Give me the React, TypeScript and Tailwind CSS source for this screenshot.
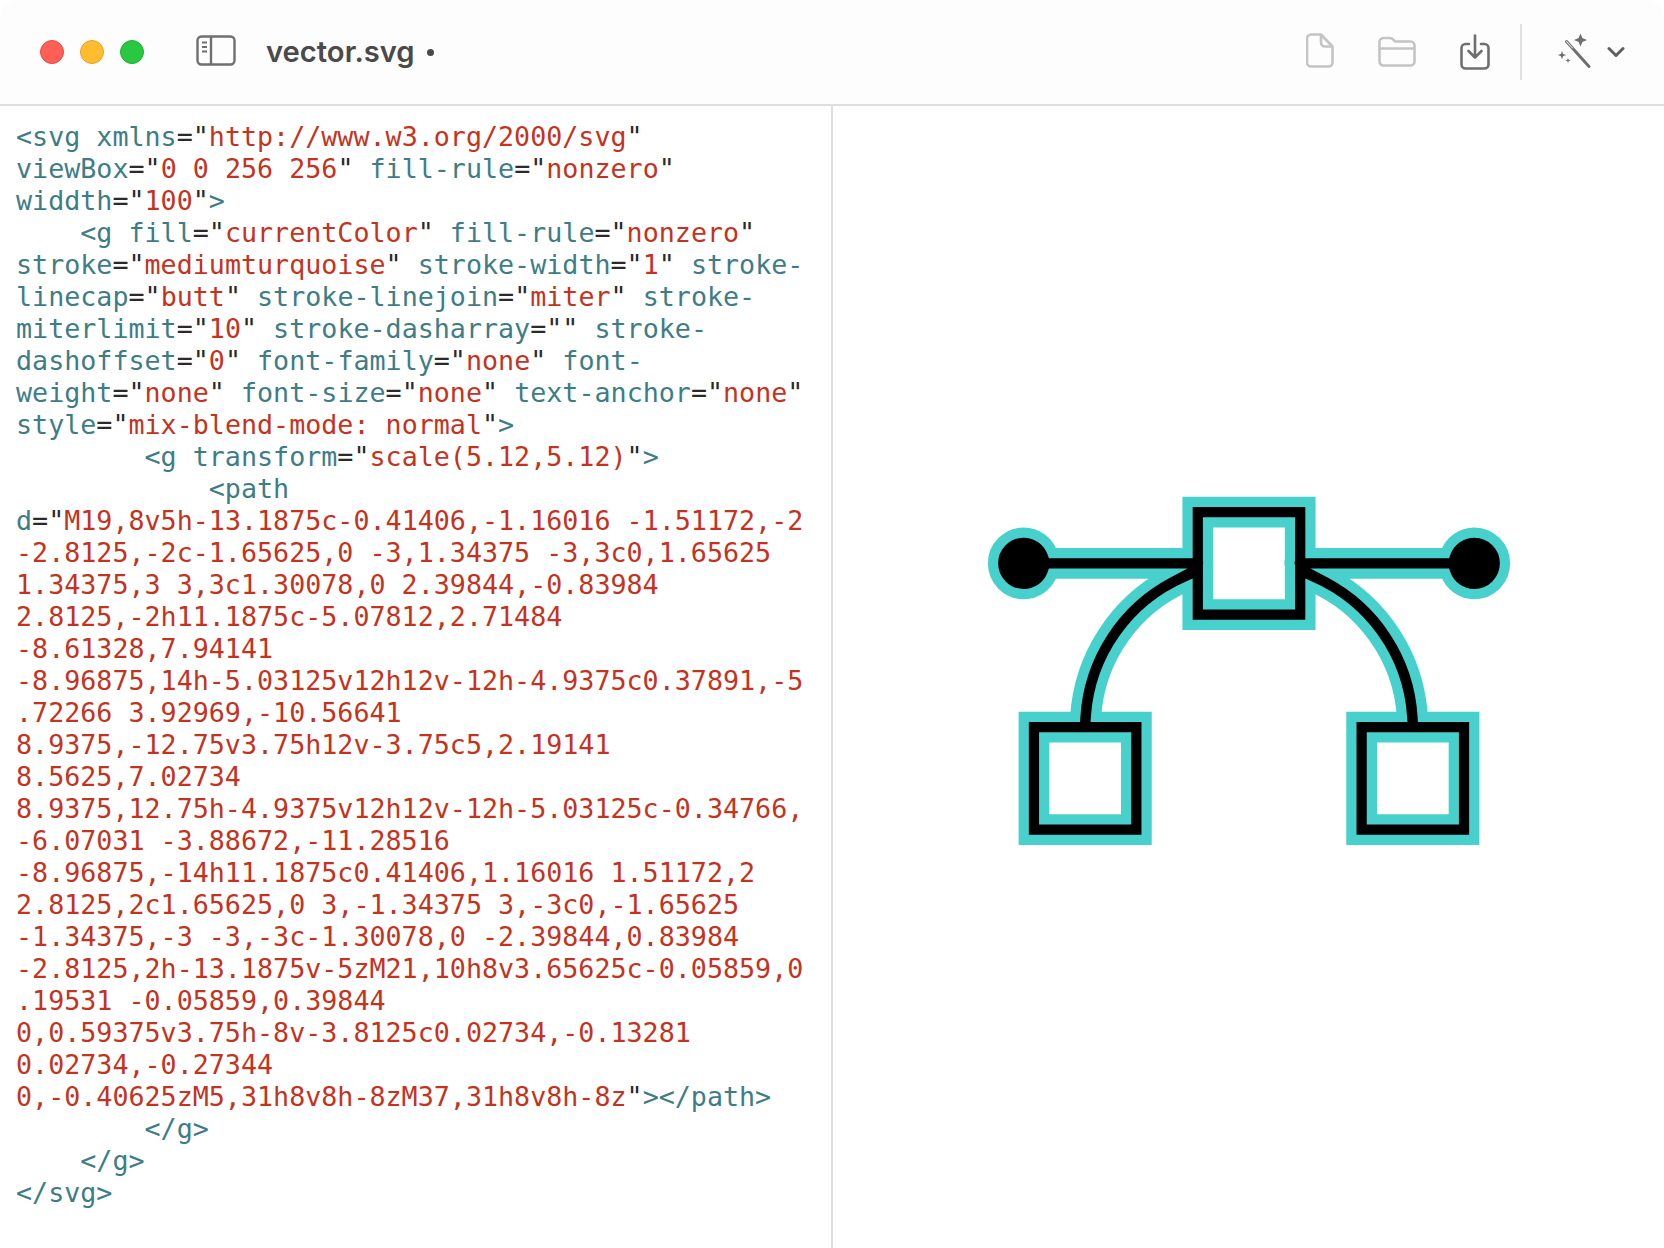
const source = [
  `<svg xmlns="http://www.w3.org/2000/svg"`,
  `viewBox="0 0 256 256" fill-rule="nonzero"`,
  `widdth="100">`,
  `    <g fill="currentColor" fill-rule="nonzero"`,
  `stroke="mediumturquoise" stroke-width="1" stroke-`,
  `linecap="butt" stroke-linejoin="miter" stroke-`,
  `miterlimit="10" stroke-dasharray="" stroke-`,
  `dashoffset="0" font-family="none" font-`,
  `weight="none" font-size="none" text-anchor="none"`,
  `style="mix-blend-mode: normal">`,
  `        <g transform="scale(5.12,5.12)">`,
  `            <path`,
  `d="M19,8v5h-13.1875c-0.41406,-1.16016 -1.51172,-2`,
  `-2.8125,-2c-1.65625,0 -3,1.34375 -3,3c0,1.65625`,
  `1.34375,3 3,3c1.30078,0 2.39844,-0.83984`,
  `2.8125,-2h11.1875c-5.07812,2.71484`,
  `-8.61328,7.94141`,
  `-8.96875,14h-5.03125v12h12v-12h-4.9375c0.37891,-5`,
  `.72266 3.92969,-10.56641`,
  `8.9375,-12.75v3.75h12v-3.75c5,2.19141`,
  `8.5625,7.02734`,
  `8.9375,12.75h-4.9375v12h12v-12h-5.03125c-0.34766,`,
  `-6.07031 -3.88672,-11.28516`,
  `-8.96875,-14h11.1875c0.41406,1.16016 1.51172,2`,
  `2.8125,2c1.65625,0 3,-1.34375 3,-3c0,-1.65625`,
  `-1.34375,-3 -3,-3c-1.30078,0 -2.39844,0.83984`,
  `-2.8125,2h-13.1875v-5zM21,10h8v3.65625c-0.05859,0`,
  `.19531 -0.05859,0.39844`,
  `0,0.59375v3.75h-8v-3.8125c0.02734,-0.13281`,
  `0.02734,-0.27344`,
  `0,-0.40625zM5,31h8v8h-8zM37,31h8v8h-8z"></path>`,
  `        </g>`,
  `    </g>`,
  `</svg>`,
]

const vectorPath =
  "M19,8v5h-13.1875c-0.41406,-1.16016 -1.51172,-2 -2.8125,-2c-1.65625,0 -3,1.34375 -3,3c0,1.65625 1.34375,3 3,3c1.30078,0 2.39844,-0.83984 2.8125,-2h11.1875c-5.07812,2.71484 -8.61328,7.94141 -8.96875,14h-5.03125v12h12v-12h-4.9375c0.37891,-5.72266 3.92969,-10.56641 8.9375,-12.75v3.75h12v-3.75c5,2.19141 8.5625,7.02734 8.9375,12.75h-4.9375v12h12v-12h-5.03125c-0.34766,-6.07031 -3.88672,-11.28516 -8.96875,-14h11.1875c0.41406,1.16016 1.51172,2 2.8125,2c1.65625,0 3,-1.34375 3,-3c0,-1.65625 -1.34375,-3 -3,-3c-1.30078,0 -2.39844,0.83984 -2.8125,2h-13.1875v-5zM21,10h8v3.65625c-0.05859,0.19531 -0.05859,0.39844 0,0.59375v3.75h-8v-3.8125c0.02734,-0.13281 0.02734,-0.27344 0,-0.40625zM5,31h8v8h-8zM37,31h8v8h-8z"

type Token = { text: string; kind: "tag" | "punct" | "value" }

// quotes run across lines in the path data, so walk the whole source once
function tokenize(lines: string[]) {
  let inString = false
  return lines.map((line) => {
    const tokens: Token[] = []
    const push = (ch: string, kind: Token["kind"]) => {
      const last = tokens[tokens.length - 1]
      if (last && last.kind === kind) last.text += ch
      else tokens.push({ text: ch, kind })
    }
    for (const ch of line) {
      if (ch === '"') {
        push(ch, "punct")
        inString = !inString
      } else if (inString) {
        push(ch, "value")
      } else {
        push(ch, ch === "=" ? "punct" : "tag")
      }
    }
    return tokens
  })
}

const tokenClass = {
  tag: "text-[#3e7d86]",
  punct: "text-[#2a2a2a]",
  value: "text-[#c4331f]",
}

function SidebarIcon() {
  return (
    <svg width="40" height="32" viewBox="0 0 40 32" fill="none" stroke="#6f6f6f" strokeWidth="2.4">
      <rect x="1.5" y="1.5" width="37" height="28" rx="4" />
      <path d="M15 1.5v28" />
      <path d="M6 7.5h5M6 12h5M6 16.5h5" strokeWidth="2" />
    </svg>
  )
}

function FileIcon() {
  return (
    <svg width="28" height="35" viewBox="0 0 28 35" fill="none" stroke="#c4c4c4" strokeWidth="2.6" strokeLinejoin="round">
      <path d="M5 1.5h10l11.5 12v16a4 4 0 0 1-4 4h-17.5a4 4 0 0 1-4-4v-24a4 4 0 0 1 4-4z" />
      <path d="M15 1.5v8a4 4 0 0 0 4 4h7.5" />
    </svg>
  )
}

function FolderIcon() {
  return (
    <svg width="38" height="31" viewBox="0 0 38 31" fill="none" stroke="#c4c4c4" strokeWidth="2.6" strokeLinejoin="round">
      <path d="M1.5 6a4 4 0 0 1 4-4h6.5a4 4 0 0 1 3 1.3l2 2.2h15.5a4 4 0 0 1 4 4v16a4 4 0 0 1-4 4h-27a4 4 0 0 1-4-4z" />
      <path d="M1.5 12.5h35" />
    </svg>
  )
}

function SaveIcon() {
  return (
    <svg width="30" height="36" viewBox="0 0 30 36" fill="none" stroke="#6f6f6f" strokeWidth="2.6" strokeLinecap="round" strokeLinejoin="round">
      <path d="M9 10h-3.5a4 4 0 0 0-4 4v16.500a4 4 0 0 0 4 4h19a4 4 0 0 0 4-4v-16.500a4 4 0 0 0-4-4h-3.500" />
      <path d="M15 1.500v22M8.500 17l6.500 6.500 6.500-6.500" />
    </svg>
  )
}

function WandIcon() {
  return (
    <svg width="34" height="35" viewBox="0 0 34 35" fill="#6f6f6f">
      <path d="M23.500 0.500l1.900 4.600 4.600 1.900-4.600 1.900-1.900 4.600-1.900-4.600-4.600-1.900 4.600-1.900z" />
      <path d="M5 18l1.100 3 3 1.100-3 1.100-1.100 3-1.100-3-3-1.100 3-1.100z" />
      <path d="M11 25l0.700 1.800 1.800 0.700-1.800 0.700-0.700 1.800-0.700-1.800-1.800-0.700 1.800-0.700z" />
      <path d="M9.500 8.500l22.500 25" fill="none" stroke="#6f6f6f" strokeWidth="3" strokeLinecap="round" />
      <path d="M9.500 8.500l6 6.600" fill="none" stroke="#fdfdfd" strokeWidth="1" strokeLinecap="round" />
    </svg>
  )
}

function ChevronIcon() {
  return (
    <svg width="18" height="12" viewBox="0 0 18 12" fill="none" stroke="#5f5f5f" strokeWidth="3" strokeLinecap="round" strokeLinejoin="round">
      <path d="M2 2.500l7 7 7-7" />
    </svg>
  )
}

export default function App() {
  const rows = tokenize(source)

  return (
    <div className="h-[1248px] w-[1664px] overflow-hidden bg-white">
      <header className="flex h-[106px] items-center rounded-t-[20px] border-b-2 border-[#dedede] bg-[#fdfdfd]">
        <div className="ml-10 flex gap-4">
          <span className="size-6 rounded-full border border-[#e5483f] bg-[#ff5f57]" />
          <span className="size-6 rounded-full border border-[#e2a428] bg-[#febc2e]" />
          <span className="size-6 rounded-full border border-[#22ad36] bg-[#28c840]" />
        </div>
        <div className="mb-[2px] ml-[52px]">
          <SidebarIcon />
        </div>
        <span className="ml-[30px] font-['Inter',sans-serif] text-[29.2px] font-semibold text-[#4a4a4a]">vector.svg</span>
        <span className="ml-3 size-[7px] rounded-full bg-[#4a4a4a]" />

        <div className="ml-auto flex items-center">
          <div className="mb-[3px]">
            <FileIcon />
          </div>
          <div className="mb-[2px] ml-[44px]">
            <FolderIcon />
          </div>
          <div className="mb-[1px] ml-[44px]">
            <SaveIcon />
          </div>
          <div className="ml-[30px] h-14 w-[2px] bg-[#e0e0e0]" />
          <div className="mb-[3px] ml-[35px]">
            <WandIcon />
          </div>
          <div className="mr-[39px] mb-[1px] ml-[16px]">
            <ChevronIcon />
          </div>
        </div>
      </header>

      <div className="flex h-[1142px]">
        <pre className="w-[833px] shrink-0 border-r-2 border-[#dedede] pt-[15px] pl-4 font-['DejaVu_Sans_Mono',monospace] text-[26.7px] leading-8">
          {rows.map((tokens, i) => (
            <div key={i} className="h-8">
              {tokens.map((t, j) => (
                <span key={j} className={tokenClass[t.kind]}>
                  {t.text}
                </span>
              ))}
            </div>
          ))}
        </pre>
        <div className="flex flex-1 items-center justify-center pb-[2px]">
          <svg width="512" height="512" viewBox="0 0 50 50" fill="#000" stroke="#48d1cc" strokeWidth="1" strokeMiterlimit="10" className="overflow-visible">
            <path d={vectorPath} />
          </svg>
        </div>
      </div>
    </div>
  )
}
